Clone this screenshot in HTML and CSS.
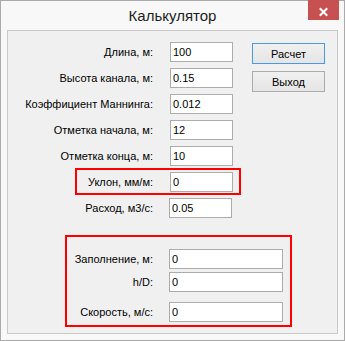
FILE: index.html
```html
<!DOCTYPE html>
<html lang="ru">
<head>
    <meta charset="UTF-8">
    <meta name="viewport" content="width=device-width, initial-scale=1.0">
    <title>Калькулятор</title>
    <link rel="stylesheet" href="styles.css">
</head>
<body>
    <div class="window">
        <div class="titlebar">
            <span></span>
            <span class="title">Калькулятор</span>
            <button class="close" aria-label="Закрыть">
                <svg width="31" height="20" viewBox="0 0 31 20">
                    <path d="M12.5 9 L18.5 15 M18.5 9 L12.5 15" stroke="#fff" stroke-width="2" stroke-linecap="square"/>
                </svg>
            </button>
        </div>
        <div class="client">
            <div class="top">
                <div class="fields">
                    <div class="row"><label>Длина, м:</label><input type="text" value="100"></div>
                    <div class="row"><label>Высота канала, м:</label><input type="text" value="0.15"></div>
                    <div class="row"><label>Коэффициент Маннинга:</label><input type="text" value="0.012"></div>
                    <div class="row"><label>Отметка начала, м:</label><input type="text" value="12"></div>
                    <div class="row"><label>Отметка конца, м:</label><input type="text" value="10"></div>
                    <div class="row hl"><label>Уклон, мм/м:</label><input type="text" value="0"></div>
                    <div class="row flow"><label>Расход, м3/с:</label><input type="text" value="0.05"></div>
                </div>
                <div class="actions">
                    <button class="btn default">Расчет</button>
                    <button class="btn">Выход</button>
                </div>
            </div>
            <div class="results">
                <div class="row"><label>Заполнение, м:</label><input type="text" value="0"></div>
                <div class="row tight"><label>h/D:</label><input type="text" value="0"></div>
                <div class="row spaced"><label>Скорость, м/с:</label><input type="text" value="0"></div>
            </div>
        </div>
    </div>
</body>
</html>
```

FILE: styles.css
```css
* {
    box-sizing: border-box;
}

body {
    margin: 0;
    font-family: "Liberation Sans", Arial, sans-serif;
    font-size: 11px;
    color: #000;
}

.window {
    width: 345px;
    height: 341px;
    border: 1px solid #aaaaaa;
    background-color: #f8f8f8;
    display: flex;
    flex-direction: column;
}

.titlebar {
    height: 29px;
    display: grid;
    grid-template-columns: 1fr auto 1fr;
    align-items: start;
}

.title {
    align-self: center;
    font-size: 15px;
    color: #1e1e1e;
}

.close {
    justify-self: end;
    width: 31px;
    height: 20px;
    margin-top: -1px;
    margin-right: 5px;
    padding: 0;
    border: none;
    background-color: #c75050;
    display: block;
}

.close svg {
    display: block;
}

.client {
    margin: 0 6px;
    height: 304px;
    border: 1px solid #c9c9c9;
    background-color: #f0f0f0;
    padding-top: 11px;
}

.top {
    display: flex;
}

.fields {
    width: 234px;
    display: flex;
    flex-direction: column;
}

.row {
    display: flex;
    align-items: center;
}

.row + .row {
    margin-top: 6px;
}

.row label {
    width: 145px;
    margin-right: 17px;
    text-align: right;
    white-space: nowrap;
}

.row input {
    width: 63px;
    height: 20px;
    padding: 0 2px;
    border: 1px solid #acacac;
    background-color: #fff;
    font-family: inherit;
    font-size: 11px;
    color: #000;
}

.fields .row.hl {
    align-self: flex-start;
    margin-top: 2px;
    margin-left: 67px;
    padding: 2px 6px 1px 0;
    border: 2px solid #ff0000;
}

.fields .row.hl label {
    width: 76px;
}

.fields .row.flow {
    margin-top: 3px;
}

.fields .row.flow input {
    margin-left: -1px;
}

.actions {
    margin-left: 10px;
    margin-top: 1px;
    display: flex;
    flex-direction: column;
    gap: 7px;
}

.btn {
    width: 73px;
    height: 21px;
    padding: 0;
    border: 1px solid #acacac;
    background: linear-gradient(#f0f0f0, #e5e5e5);
    font-family: inherit;
    font-size: 11px;
    color: #000;
}

.btn.default {
    border-color: #4a98e6;
}

.results {
    width: 227px;
    margin-top: 17px;
    margin-left: 57px;
    padding: 12px 7px 3px 0;
    border: 2px solid #ff0000;
}

.results .row label {
    width: 86px;
    margin-right: 16px;
}

.results .row input {
    width: 114px;
}

.results .row.tight {
    margin-top: 3px;
}

.results .row.spaced {
    margin-top: 10px;
}
```
